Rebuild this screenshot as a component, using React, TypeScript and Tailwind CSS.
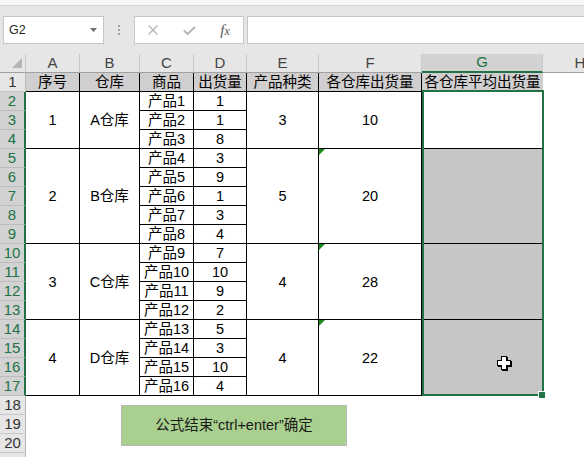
import React from 'react';

type Group = { no: string; wh: string; items: [string, string][]; kinds: string; total: string };

const groups: Group[] = [
  { no: '1', wh: 'A仓库', items: [['产品1', '1'], ['产品2', '1'], ['产品3', '8']], kinds: '3', total: '10' },
  { no: '2', wh: 'B仓库', items: [['产品4', '3'], ['产品5', '9'], ['产品6', '1'], ['产品7', '3'], ['产品8', '4']], kinds: '5', total: '20' },
  { no: '3', wh: 'C仓库', items: [['产品9', '7'], ['产品10', '10'], ['产品11', '9'], ['产品12', '2']], kinds: '4', total: '28' },
  { no: '4', wh: 'D仓库', items: [['产品13', '5'], ['产品14', '3'], ['产品15', '10'], ['产品16', '4']], kinds: '4', total: '22' },
];

const HEIGHT: Record<number, string> = { 3: 'h-[57px]', 4: 'h-[76px]', 5: 'h-[95px]' };

const COLS = [
  { l: 'A', w: 'w-[54px]' },
  { l: 'B', w: 'w-[60px]' },
  { l: 'C', w: 'w-[54px]' },
  { l: 'D', w: 'w-[53px]' },
  { l: 'E', w: 'w-[72px]' },
  { l: 'F', w: 'w-[103px]' },
];

const cell = 'border-r border-b border-black flex items-center justify-center leading-[18px]';
const head = 'h-[19px] bg-[#d0cece] text-[14.5px] whitespace-nowrap';

function GreenTick() {
  return (
    <svg className="absolute left-0 top-0" width="6" height="6" viewBox="0 0 6 6">
      <polygon points="0,0 6,0 0,6" fill="#1a8a1a" />
    </svg>
  );
}

function Cursor() {
  return (
    <svg className="absolute left-[75px] top-[264px]" width="16" height="16" viewBox="0 0 16 16">
      <path d="M5 1h6v4h4v6h-4v4h-6v-4h-4v-6h4z" fill="#000" />
      <path d="M4 0h6v4h4v6h-4v4h-6v-4h-4v-6h4z" fill="#000" />
      <path d="M5 1h4v4h4v4h-4v4h-4v-4h-4v-4h4z" fill="#fff" />
    </svg>
  );
}

export default function App() {
  const rows = Array.from({ length: 21 }, (_, i) => i + 1);
  return (
    <div className="w-[584px] h-[457px] overflow-hidden bg-white font-['Liberation_Sans','Noto_Sans_CJK_SC',sans-serif] text-black">
      {/* formula bar */}
      <div className="h-[54px] bg-[#e6e6e6] flex flex-col">
        <div className="h-[6px] bg-[#f7f7f7] border-b border-[#d6d6d6]" />
        <div className="mt-[10px] h-[28px] flex">
          <div className="ml-[3px] w-[101px] h-full bg-white border border-[#c6c6c6] flex items-center justify-between pl-[5px] pr-[6px]">
            <span className="text-[12.5px] text-[#262626]">G2</span>
            <svg width="7" height="4" viewBox="0 0 7 4">
              <polygon points="0,0 7,0 3.5,4" fill="#707070" />
            </svg>
          </div>
          <div className="w-[30px] flex flex-col items-center justify-center gap-[2px]">
            <div className="w-[2px] h-[2px] bg-[#a0a0a0]" />
            <div className="w-[2px] h-[2px] bg-[#a0a0a0]" />
            <div className="w-[2px] h-[2px] bg-[#a0a0a0]" />
          </div>
          <div className="w-[110px] h-full bg-white border border-[#c6c6c6] flex items-center">
            <div className="w-[36px] flex justify-center">
              <svg width="10" height="10" viewBox="0 0 10 10">
                <path d="M0.5 0.5L9.5 9.5M9.5 0.5L0.5 9.5" stroke="#b5b5b5" strokeWidth="1.3" />
              </svg>
            </div>
            <div className="w-[36px] flex justify-center">
              <svg width="13" height="9" viewBox="0 0 13 9">
                <polyline points="1,4.5 4.5,8 12,1" fill="none" stroke="#b5b5b5" strokeWidth="2" />
              </svg>
            </div>
            <div className="w-[36px] flex justify-center">
              <span className="font-['Liberation_Serif',serif] italic text-[15px] text-[#555] leading-none">
                f<span className="text-[12px]">x</span>
              </span>
            </div>
          </div>
          <div className="ml-[3px] flex-1 h-full bg-white border border-r-0 border-[#c6c6c6]" />
        </div>
      </div>

      {/* column headers */}
      <div className="flex h-[19px] bg-[#e6e6e6]">
        <div className="w-[26px] shrink-0 border-r border-b border-r-[#c8c8c8] border-b-[#a0a0a0] flex items-end justify-end pr-[3px] pb-[4px]">
          <svg width="10" height="10" viewBox="0 0 10 10">
            <polygon points="10,0 10,10 0,10" fill="#b4b4b4" />
          </svg>
        </div>
        {COLS.map((c) => (
          <div
            key={c.l}
            className={`${c.w} shrink-0 border-r border-b border-r-[#c8c8c8] border-b-[#a0a0a0] flex items-center justify-center text-[15px] text-[#444]`}
          >
            {c.l}
          </div>
        ))}
        <div className="w-[121px] shrink-0 bg-[#d2d2d2] border-r border-b-2 border-r-[#c8c8c8] border-b-[#217346] flex items-center justify-center text-[15px] text-[#217346]">
          G
        </div>
        <div className="w-[74px] shrink-0 border-b border-b-[#a0a0a0] flex items-center justify-center text-[15px] text-[#444]">
          H
        </div>
      </div>

      {/* sheet body */}
      <div className="flex">
        <div className="w-[26px] shrink-0 flex flex-col">
          {rows.map((r) => {
            const sel = r >= 2 && r <= 17;
            return (
              <div
                key={r}
                className={
                  sel
                    ? 'h-[19px] bg-[#d2d2d2] border-b border-r-2 border-b-[#bcbcbc] border-r-[#217346] flex items-center justify-center text-[15px] text-[#217346]'
                    : 'h-[19px] bg-[#e6e6e6] border-b border-r border-b-[#c8c8c8] border-r-[#b8b8b8] flex items-center justify-center text-[15px] text-[#333]'
                }
              >
                {r <= 20 ? r : ''}
              </div>
            );
          })}
        </div>

        <div className="relative flex flex-1 items-start">
          {/* A */}
          <div className="w-[54px] shrink-0 flex flex-col">
            <div className={`${cell} ${head}`}>序号</div>
            {groups.map((g) => (
              <div key={g.no} className={`${cell} ${HEIGHT[g.items.length]} text-[14.5px]`}>{g.no}</div>
            ))}
          </div>
          {/* B */}
          <div className="w-[60px] shrink-0 flex flex-col">
            <div className={`${cell} ${head}`}>仓库</div>
            {groups.map((g) => (
              <div key={g.no} className={`${cell} ${HEIGHT[g.items.length]} text-[14.5px]`}>{g.wh}</div>
            ))}
          </div>
          {/* C */}
          <div className="w-[54px] shrink-0 flex flex-col">
            <div className={`${cell} ${head}`}>商品</div>
            {groups.flatMap((g) => g.items).map(([p]) => (
              <div key={p} className={`${cell} h-[19px] text-[14.5px] whitespace-nowrap`}>{p}</div>
            ))}
          </div>
          {/* D */}
          <div className="w-[53px] shrink-0 flex flex-col">
            <div className={`${cell} ${head}`}>出货量</div>
            {groups.flatMap((g) => g.items).map(([p, q]) => (
              <div key={p} className={`${cell} h-[19px] text-[14.5px]`}>{q}</div>
            ))}
          </div>
          {/* E */}
          <div className="w-[72px] shrink-0 flex flex-col">
            <div className={`${cell} ${head}`}>产品种类</div>
            {groups.map((g) => (
              <div key={g.no} className={`${cell} ${HEIGHT[g.items.length]} text-[14.5px]`}>{g.kinds}</div>
            ))}
          </div>
          {/* F */}
          <div className="w-[103px] shrink-0 flex flex-col">
            <div className={`${cell} ${head}`}>各仓库出货量</div>
            {groups.map((g, i) => (
              <div key={g.no} className={`${cell} ${HEIGHT[g.items.length]} relative text-[14.5px]`}>
                {i > 0 && <GreenTick />}
                {g.total}
              </div>
            ))}
          </div>
          {/* G */}
          <div className="w-[121px] shrink-0 flex flex-col">
            <div className={`border-b border-black flex items-center justify-center leading-[18px] ${head}`}>各仓库平均出货量</div>
            <div className="relative flex flex-col">
              {groups.map((g, i) => (
                <div
                  key={g.no}
                  className={`${HEIGHT[g.items.length]} border-b border-black ${i === 0 ? 'bg-white' : 'bg-[#c6c6c6]'}`}
                />
              ))}
              <div className="absolute -top-[2px] left-0 -right-px bottom-0 border-2 border-[#217346]">
                <div className="absolute -right-[3px] -bottom-[4px] w-[7px] h-[7px] bg-[#217346] border-l border-t border-white" />
              </div>
              <Cursor />
            </div>
          </div>

          {/* floating shape */}
          <div className="absolute left-[95px] top-[332px] w-[226px] h-[41px] bg-[#a9d08e] border border-[#b8b8b8] flex items-center justify-center text-[14.5px] text-[#1a1a1a]">
            公式结束“ctrl+enter”确定
          </div>
        </div>
      </div>
    </div>
  );
}
